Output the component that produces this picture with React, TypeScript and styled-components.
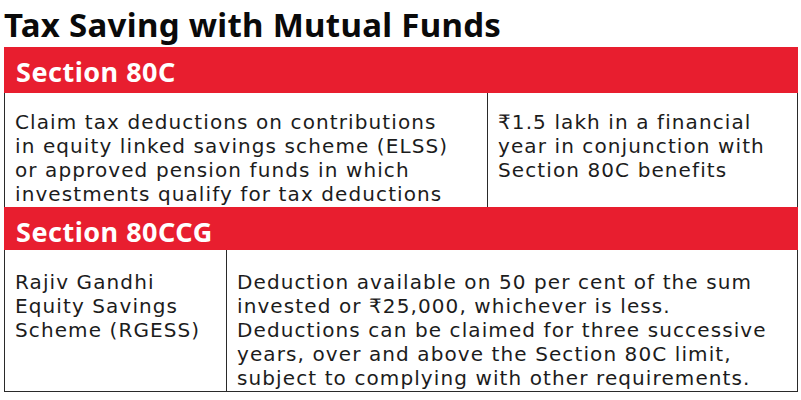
import React from "react";
import styled, { createGlobalStyle } from "styled-components";

const Global = createGlobalStyle`
  html, body { margin: 0; padding: 0; background: #ffffff; }
  body { font-family: "DejaVu Sans", "Noto Sans", sans-serif; color: #1a1a1a; }
`;

const Page = styled.div`
  width: 801px;
  height: 400px;
  padding: 0 5px 0 4px;
  box-sizing: border-box;
  overflow: hidden;
`;

const Title = styled.h1`
  margin: 0;
  padding-top: 5px;
  height: 47px;
  box-sizing: border-box;
  font-family: "Noto Sans", sans-serif;
  font-weight: 700;
  font-size: 33px;
  line-height: 40px;
  letter-spacing: 0.3px;
  color: #0a0a0a;
`;

const Table = styled.div`
  width: 792px;
  border-left: 1px solid #2a2a2a;
  border-right: 1px solid #2a2a2a;
  border-bottom: 1px solid #2a2a2a;
`;

const SectionHeader = styled.div<{ $h: number }>`
  height: ${(p) => p.$h}px;
  margin: 0 -1px;
  background: #e81e2f;
  color: #ffffff;
  font-family: "Noto Sans", sans-serif;
  font-weight: 700;
  font-size: 27px;
  line-height: 30px;
  letter-spacing: 0.5px;
  padding: 10px 0 0 12px;
  box-sizing: border-box;
`;

const Row = styled.div<{ $cols: string; $h: number }>`
  display: grid;
  grid-template-columns: ${(p) => p.$cols};
  height: ${(p) => p.$h}px;
`;

const Cell = styled.div<{ $pt: number; $divider?: boolean }>`
  padding: ${(p) => p.$pt}px 4px 0 10px;
  font-family: "DejaVu Sans", sans-serif;
  font-size: 20px;
  line-height: 24px;
  letter-spacing: 1.1px;
  color: #1c1c1c;
  white-space: nowrap;
  border-left: ${(p) => (p.$divider ? "1px solid #2a2a2a" : "none")};
`;

export default function App() {
  return (
    <Page>
      <Global />
      <Title>Tax Saving with Mutual Funds</Title>
      <Table>
        <SectionHeader $h={46}>Section 80C</SectionHeader>
        <Row $cols="482px 1fr" $h={114}>
          <Cell $pt={17}>
            Claim tax deductions on contributions
            <br />
            in equity linked savings scheme (ELSS)
            <br />
            or approved pension funds in which
            <br />
            investments qualify for tax deductions
          </Cell>
          <Cell $pt={17} $divider>
            ₹1.5 lakh in a financial
            <br />
            year in conjunction with
            <br />
            Section 80C benefits
          </Cell>
        </Row>
        <SectionHeader $h={43}>Section 80CCG</SectionHeader>
        <Row $cols="221px 1fr" $h={141}>
          <Cell $pt={20}>
            Rajiv Gandhi
            <br />
            Equity Savings
            <br />
            Scheme (RGESS)
          </Cell>
          <Cell $pt={20} $divider>
            Deduction available on 50 per cent of the sum
            <br />
            invested or ₹25,000, whichever is less.
            <br />
            Deductions can be claimed for three successive
            <br />
            years, over and above the Section 80C limit,
            <br />
            subject to complying with other requirements.
          </Cell>
        </Row>
      </Table>
    </Page>
  );
}
